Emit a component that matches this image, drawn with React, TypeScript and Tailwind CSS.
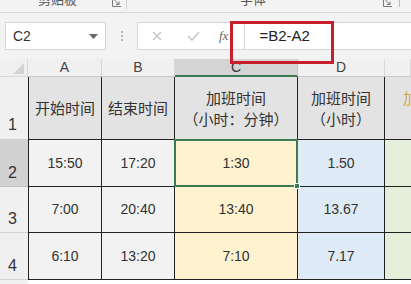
import React from "react";

const cjk = { fontFamily: '"Noto Sans CJK SC", "Noto Sans", sans-serif' };
const num = { fontFamily: '"Liberation Sans", Arial, sans-serif' };

const cols = ["A", "B", "C", "D", ""];

const rows = [
  { n: "2", a: "15:50", b: "17:20", c: "1:30", d: "1.50" },
  { n: "3", a: "7:00", b: "20:40", c: "13:40", d: "13.67" },
  { n: "4", a: "6:10", b: "13:20", c: "7:10", d: "7.17" },
];

function LauncherIcon() {
  return (
    <svg width="9" height="9" viewBox="0 0 9 9">
      <path d="M0.5 0v8.5H9" stroke="#777" fill="none" />
      <path d="M2.5 2l4.5 4.5M7 3.5v3H4" stroke="#777" fill="none" />
    </svg>
  );
}

function RibbonStrip() {
  return (
    <div className="shrink-0 h-[13px] border-b border-[#d8d8d8] bg-[#f3f3f3] overflow-hidden">
      <div className="flex items-start h-full">
        <div className="w-[127px] flex justify-between pr-[5px] border-r border-[#cfcfcf] h-[9px]">
          <span className="ml-[38px] -mt-[10px] text-[13px] leading-[18px] text-[#555]" style={cjk}>剪贴板</span>
          <span className="-mt-[2px]"><LauncherIcon /></span>
        </div>
        <div className="flex-1 flex justify-between pr-[11px]">
          <span className="ml-[113px] -mt-[10px] text-[13px] leading-[18px] text-[#555]" style={cjk}>字体</span>
          <span className="-mt-[2px] h-[9px] border-r border-[#bbb] pr-[7px]"><LauncherIcon /></span>
        </div>
      </div>
    </div>
  );
}

function FormulaBar() {
  return (
    <div className="relative shrink-0 h-[46px] bg-[#f3f3f3] flex items-center pl-[5px]">
      <div className="w-[101px] h-[28px] bg-white border border-[#d6d6d6] flex items-center justify-between px-[7px]">
        <span className="text-[14px] text-[#333]" style={num}>C2</span>
        <svg width="9" height="5" viewBox="0 0 9 5"><path d="M0 0h9L4.5 5z" fill="#666" /></svg>
      </div>
      <div className="w-[31px] flex justify-center">
        <div className="flex flex-col gap-[2px]">
          <span className="w-[2px] h-[2px] bg-[#bbb]" />
          <span className="w-[2px] h-[2px] bg-[#bbb]" />
          <span className="w-[2px] h-[2px] bg-[#bbb]" />
        </div>
      </div>
      <div className="flex-1 h-[28px] bg-white border border-[#d6d6d6] border-r-0 flex items-center">
        <svg className="ml-[14px]" width="10" height="10" viewBox="0 0 10 10"><path d="M1 1l8 8M9 1l-8 8" stroke="#c4c4c4" strokeWidth="1.4" /></svg>
        <svg className="ml-[25px]" width="13" height="10" viewBox="0 0 13 10"><path d="M1 5l4 4 7-8" stroke="#c4c4c4" strokeWidth="1.5" fill="none" /></svg>
        <span className="ml-[19px] italic text-[13px] text-[#666]" style={{ fontFamily: '"Liberation Serif", serif' }}>fx</span>
        <div className="ml-[16px] w-px h-[26px] bg-[#d6d6d6]" />
        <span className="ml-[14px] text-[15px] text-[#222]" style={num}>=B2-A2</span>
      </div>
      <div className="absolute left-[230px] top-[8px] w-[104px] h-[43px] border-[3px] border-[#c8202a]" />
    </div>
  );
}

export default function App() {
  return (
    <div className="w-[411px] h-[284px] overflow-hidden bg-[#f3f3f3] flex flex-col">
      <RibbonStrip />
      <FormulaBar />
      <div className="shrink-0 grid grid-cols-[28px_74px_73px_123px_87px_26px] grid-rows-[18px_63px_47px_46px_47px_10px]">
        {/* column headers */}
        <div className="relative bg-[#f0f0f0] border-b border-[#c6c6c6] border-r border-[#d8d8d8]">
          <svg className="absolute right-[3px] bottom-[2px]" width="11" height="11" viewBox="0 0 11 11"><path d="M11 0v11H0z" fill="#d4d4d4" /></svg>
        </div>
        {cols.map((c, i) => (
          <div
            key={i}
            className={
              c === "C"
                ? "bg-[#d4d4d4] border-b-2 border-[#3d7a52] border-r border-r-[#c8c8c8] flex items-center justify-center text-[14px] text-[#333]"
                : "bg-[#f0f0f0] border-b border-[#c6c6c6] border-r border-r-[#d8d8d8] flex items-center justify-center text-[14px] text-[#444]"
            }
            style={num}
          >
            {c}
          </div>
        ))}

        {/* row 1 */}
        <div className="bg-[#f0f0f0] border-b border-[#d0d0d0] flex items-end pl-[8px] pb-[2px] text-[16px] text-[#333]" style={num}>1</div>
        <div className="bg-[#e3e3e3] border-l border-r border-b border-[#222] flex items-center justify-center text-[15px] text-[#333]" style={cjk}>开始时间</div>
        <div className="bg-[#e3e3e3] border-r border-b border-[#222] flex items-center justify-center text-[15px] text-[#333]" style={cjk}>结束时间</div>
        <div className="bg-[#e3e3e3] border-r border-b border-[#222] flex flex-col items-center justify-center leading-[21px] text-[15px] text-[#333]" style={cjk}>
          <span>加班时间</span>
          <span>（小时：分钟）</span>
        </div>
        <div className="bg-[#e3e3e3] border-r border-b border-[#222] flex flex-col items-center justify-center leading-[21px] text-[15px] text-[#333]" style={cjk}>
          <span>加班时间</span>
          <span>（小时）</span>
        </div>
        <div className="bg-[#e3e3e3] border-b border-[#222] overflow-hidden pl-[18px] pt-[10px] text-[15px] text-[#d8a443] whitespace-nowrap" style={cjk}>加班时间</div>

        {/* data rows */}
        {rows.map((r, i) => (
          <React.Fragment key={r.n}>
            <div
              className={
                i === 0
                  ? "bg-[#d2d2d2] border-b border-[#c0c0c0] flex items-end pl-[8px] pb-[1px] text-[16px] text-[#333]"
                  : "bg-[#f0f0f0] border-b border-[#d0d0d0] flex items-end pl-[8px] pb-[1px] text-[16px] text-[#333]"
              }
              style={num}
            >
              {r.n}
            </div>
            <div className="bg-[#f2f2f2] border-l border-r border-b border-[#222] flex items-center justify-center text-[14px] text-[#333]" style={num}>{r.a}</div>
            <div className="bg-[#f2f2f2] border-r border-b border-[#222] flex items-center justify-center text-[14px] text-[#333]" style={num}>{r.b}</div>
            <div
              className={
                i === 0
                  ? "relative bg-[#fff2cf] border-2 border-[#3d7a52] -mt-px -ml-px flex items-center justify-center text-[14px] text-[#333]"
                  : "bg-[#fff2cf] border-r border-b border-[#222] flex items-center justify-center text-[14px] text-[#333]"
              }
              style={num}
            >
              {r.c}
              {i === 0 && <span className="absolute -right-[4px] -bottom-[4px] w-[6px] h-[6px] bg-[#3d7a52] border border-white" />}
            </div>
            <div className="bg-[#deebf6] border-r border-b border-[#222] flex items-center justify-center text-[14px] text-[#333]" style={num}>{r.d}</div>
            <div className="bg-[#e3efda] border-b border-[#222]" />
          </React.Fragment>
        ))}

        <div className="bg-[#f0f0f0]" />
        <div className="bg-white col-span-5" />
      </div>
    </div>
  );
}
